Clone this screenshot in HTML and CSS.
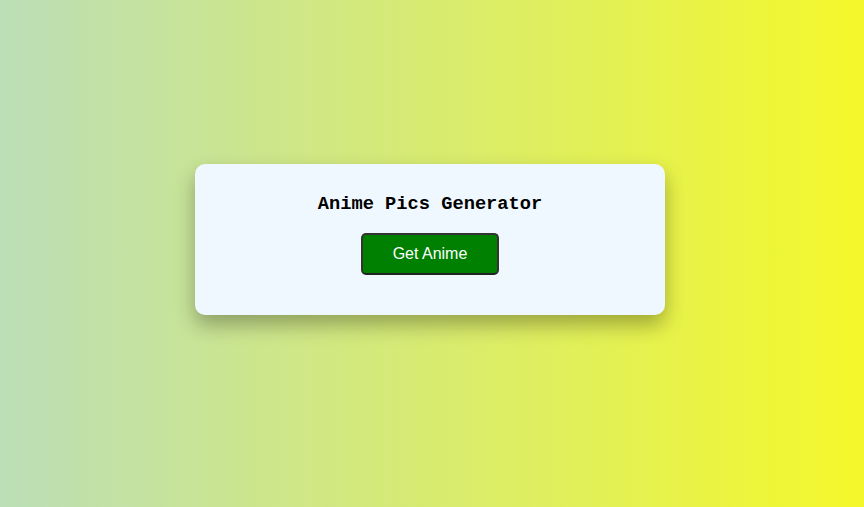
FILE: index.html
```html
<!DOCTYPE html>
<html>
<head>
<meta charset="utf-8">
<link rel="stylesheet" href="styles.css">
</head>
<body>
<main class="page">
  <div class="card">
    <h3 class="title">Anime Pics Generator</h3>
    <button class="btn">Get Anime</button>
  </div>
</main>
</body>
</html>
```
FILE: styles.css
```css
html, body { margin: 0; height: 100%; }
body {
  background: linear-gradient(to right, #bbdeb7, #f4f82a);
  font-family: "Liberation Sans", Arial, sans-serif;
}
.page {
  display: flex;
  justify-content: center;
  align-items: flex-start;
  padding: 164px 4px 0 0;
  box-sizing: border-box;
  height: 100%;
}
.card {
  width: 470px;
  height: 151px;
  box-sizing: border-box;
  background: #f0f8ff;
  border-radius: 10px;
  box-shadow: 0 10px 20px rgba(0, 0, 0, 0.3);
  display: flex;
  flex-direction: column;
  align-items: center;
  padding-top: 10px;
}
.title {
  font-family: "Liberation Mono", "Courier New", monospace;
  font-weight: bold;
  font-size: 18.72px;
  margin: 19px 0 18px;
  color: #000;
}
.btn {
  background: #008000;
  color: #fff;
  border: 2px solid #333;
  border-bottom-color: #222;
  border-radius: 5px;
  font-family: "Liberation Sans", Arial, sans-serif;
  font-size: 16px;
  width: 138px;
  height: 42px;
  padding: 0;
}
```
